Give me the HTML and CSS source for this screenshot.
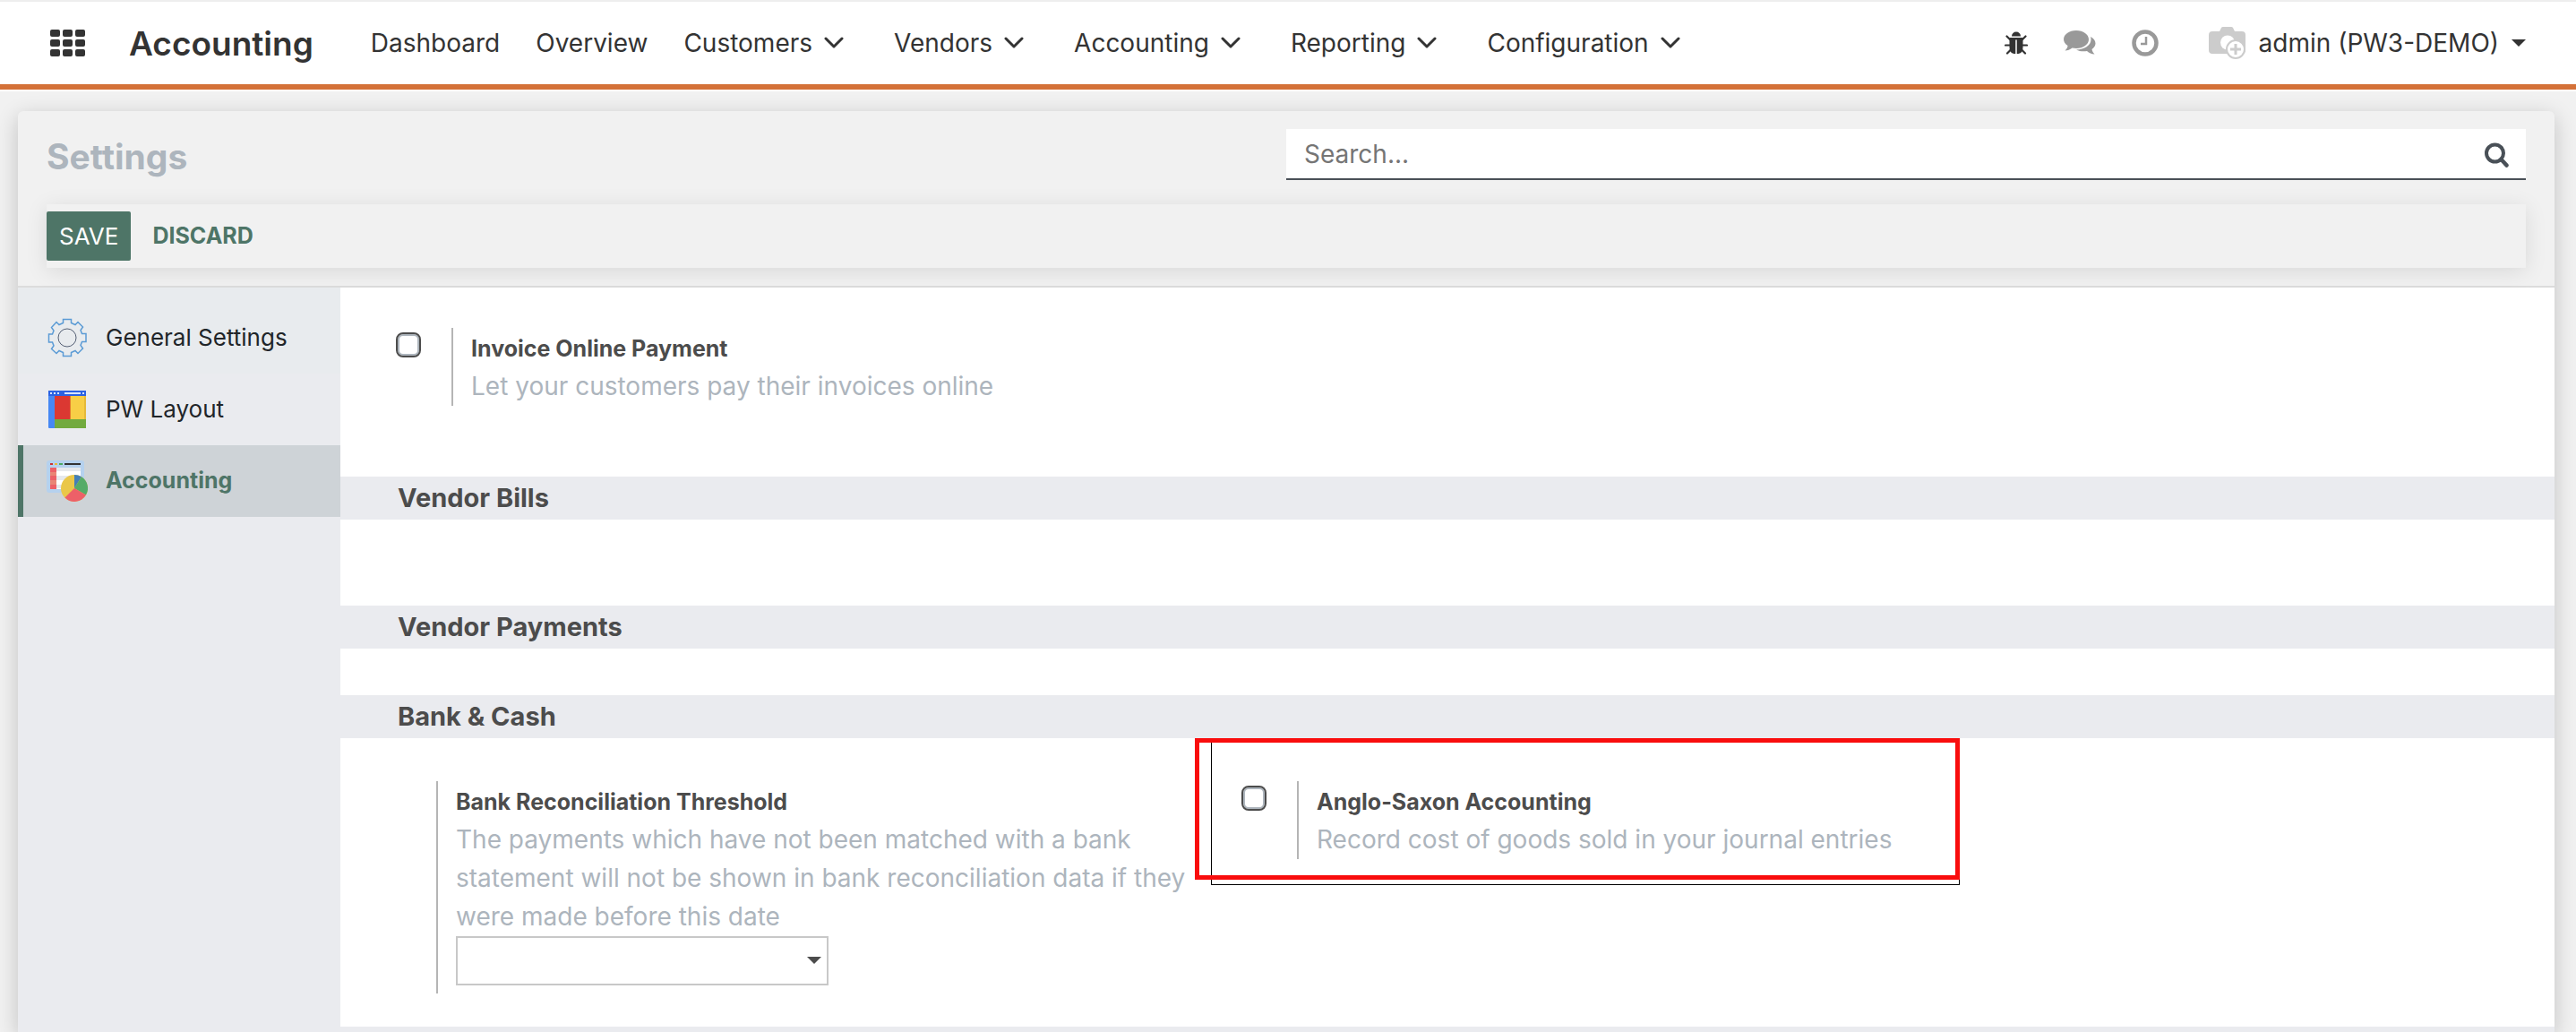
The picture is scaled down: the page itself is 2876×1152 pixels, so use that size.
FILE: index.html
```html
<!DOCTYPE html>
<html lang="en">
<head>
<meta charset="utf-8">
<title>Settings - Accounting</title>
<link rel="stylesheet" href="styles.css">
</head>
<body>
<header class="navbar">
  <button class="apps" type="button" aria-label="Applications">
    <svg width="40" height="30" viewBox="0 0 40 30" fill="#333"><rect x="0" y="0" width="11" height="8" rx="2"/><rect x="14" y="0" width="11" height="8" rx="2"/><rect x="28" y="0" width="11" height="8" rx="2"/><rect x="0" y="11" width="11" height="8" rx="2"/><rect x="14" y="11" width="11" height="8" rx="2"/><rect x="28" y="11" width="11" height="8" rx="2"/><rect x="0" y="22" width="11" height="8" rx="2"/><rect x="14" y="22" width="11" height="8" rx="2"/><rect x="28" y="22" width="11" height="8" rx="2"/></svg>
  </button>
  <a class="brand" href="#">Accounting</a>
  <nav class="menu">
    <a href="#">Dashboard</a>
    <a href="#">Overview</a>
    <a class="drop" href="#">Customers <svg class="chev" viewBox="0 0 22 14"><path d="M2 2l9 9 9-9"/></svg></a>
    <a class="drop" href="#">Vendors <svg class="chev" viewBox="0 0 22 14"><path d="M2 2l9 9 9-9"/></svg></a>
    <a class="drop" href="#">Accounting <svg class="chev" viewBox="0 0 22 14"><path d="M2 2l9 9 9-9"/></svg></a>
    <a class="drop" href="#">Reporting <svg class="chev" viewBox="0 0 22 14"><path d="M2 2l9 9 9-9"/></svg></a>
    <a class="drop" href="#">Configuration <svg class="chev" viewBox="0 0 22 14"><path d="M2 2l9 9 9-9"/></svg></a>
  </nav>
  <div class="systray">
    <button type="button" aria-label="Debug"><svg width="26" height="26" viewBox="0 0 26 26"><path d="M8 5.500a5 5 0 0 1 10 0z" fill="#333"/><path d="M5.500 7h15v11q0 6-5 7h-5q-5-1-5-7z" fill="#333"/><path d="M6 9L2.500 5.500M20 9l3.500-3.500M6 15.500H1M20 15.500h5M7 20.500l-4 4M19 20.500l4 4" stroke="#333" stroke-width="2.200" stroke-linecap="round"/><path d="M13 9.500V25" stroke="#ddd" stroke-width="1.800"/></svg></button>
    <button type="button" aria-label="Conversations"><svg width="36" height="28" viewBox="0 0 36 28" fill="#999"><path d="M14 0c8 0 14 4.500 14 10s-6 10-14 10c-1.500 0-3-.2-4.500-.5C7 21.500 4.500 22.500 1.500 22.500c1.500-1.500 3-3.500 3-5.500C1.500 15 0 12.500 0 10 0 4.500 6 0 14 0z"/><path d="M30 7c3.500 1.800 5.500 4.300 5.500 7.500 0 2.500-1.500 4.500-4 6.500.3 2 1.500 4 3 5.500-3.500 0-6-1.500-8.500-3.500-4 .8-8.500.3-12-1.500C23 21 30.500 17 30.500 10c0-1-.2-2-.5-3z"/></svg></button>
    <button type="button" aria-label="Activities"><svg width="30" height="30" viewBox="0 0 30 30" fill="none" stroke="#999"><circle cx="15" cy="15" r="12.500" stroke-width="4.500"/><path d="M16 8v8h-6" stroke-width="2.500"/></svg></button>
    <button class="user" type="button">
      <svg width="42" height="36" viewBox="0 0 42 36"><path d="M4 5h8l2-4q.5-1 2-1h9q1.500 0 2 1l2 4h8q4 0 4 4v17q0 4-4 4H4q-4 0-4-4V9q0-4 4-4z" fill="#ccc"/><circle cx="21" cy="17.500" r="8" fill="#fff"/><circle cx="30" cy="25" r="10" fill="#fff" stroke="#ccc" stroke-width="2"/><path d="M30 19v12M24 25h12" stroke="#ccc" stroke-width="3"/></svg>
      <span>admin (PW3-DEMO)</span>
      <svg width="16" height="8" viewBox="0 0 16 8"><path d="M0 0h16L8 8z" fill="#333"/></svg>
    </button>
  </div>
</header>
<main class="card">
  <div class="control">
    <div class="titlebar">
      <h1>Settings</h1>
      <div class="search">
        <input type="text" aria-label="Search" placeholder="Search...">
        <svg width="27" height="28" viewBox="0 0 27 28" fill="none" stroke="#495057"><circle cx="11.500" cy="12" r="9.500" stroke-width="4"/><path d="M18.500 19l6 6.500" stroke-width="4.500" stroke-linecap="round"/></svg>
      </div>
    </div>
    <div class="actions">
      <button class="save" type="button">SAVE</button>
      <button class="discard" type="button">DISCARD</button>
    </div>
  </div>
  <div class="body">
    <aside class="tabs">
      <a class="general" href="#"><svg width="46" height="46" viewBox="0 0 46 46" fill="none"><path d="M18.500 6.500V2.500h9v4l4.500 2 3-3 5.500 5.500-2.500 3.500 1.500 4h4.500v9h-4.500l-1.500 4 2.500 3.500-5.500 5.500-3-3-4.500 2v4h-9v-4l-4.500-2-3 3L5.500 35.500l2.500-3.500-1.500-4H2.500v-9h4l1.500-4-2.500-3.500L11 5.500l3 3z" stroke="#5b9bd5" stroke-width="1.500"/><circle cx="23" cy="23" r="10" stroke="#556075"/></svg>General Settings</a>
      <a href="#"><svg width="46" height="46" viewBox="0 0 46 46"><rect x="2" y="2" width="42" height="42" rx="1" fill="#4688f4"/><path d="M2 2h42v6H2z" fill="#2b62e3"/><path d="M4 4h2v2H4zM8 4h2v2H8zM12 4h2v2h-2zM20 4h18v2H20zM40 4h2v2h-2z" fill="#d5e3ff"/><path d="M9 8h18v26H9z" fill="#db3832"/><path d="M27 8h17v26H27z" fill="#f8ce46"/><path d="M26 8h1v26h-1z" fill="#e57a2f"/><path d="M9 34h35v10H9z" fill="#72aa3e"/><path d="M42 8h2v26h-2z" fill="#e5b93a"/></svg>PW Layout</a>
      <a class="active" href="#"><svg width="46" height="46" viewBox="0 0 46 46"><rect width="42" height="36" rx="3" fill="#b5d1ee"/><path d="M4 8h34v24H4z" fill="#fff"/><path d="M11 8h27v4H11zM11 17h27v5H11zM11 27h27v4H11z" fill="#e6e9ed"/><path d="M4 8h7v24H4z" fill="#ed6068"/><path d="M4 13h7v4H4zM4 22h7v5H4z" fill="#e98576"/><path d="M4 4h3" stroke="#c33" stroke-width="2"/><path d="M9 4h3" stroke="#e8b93a" stroke-width="2"/><path d="M14 4h4" stroke="#4aa864" stroke-width="2"/><path d="M20 4h18" stroke="#333" stroke-width="2"/><g><circle cx="31" cy="31" r="15" fill="#eac749"/><path d="M31 31V16a15 15 0 0 1 8 2.300z" fill="#437fb8"/><path d="M31 31l8-12.700a15 15 0 0 1 5 20.200z" fill="#55ab68"/><path d="M31 31l13 7.500a15 15 0 0 1-23.600 3.100z" fill="#ed6068"/></g></svg>Accounting</a>
    </aside>
    <div class="settings">
      <section class="group first">
        <div class="setting">
          <input type="checkbox" id="online">
          <div class="detail"><label for="online">Invoice Online Payment</label><p>Let your customers pay their invoices online</p></div>
        </div>
      </section>
      <h2>Vendor Bills</h2>
      <section class="group bills"></section>
      <h2>Vendor Payments</h2>
      <section class="group payments"></section>
      <h2>Bank &amp; Cash</h2>
      <section class="group bank">
        <div class="setting threshold">
          <div class="detail"><label for="date">Bank Reconciliation Threshold</label><p>The payments which have not been matched with a bank statement will not be shown in bank reconciliation data if they were made before this date</p>
            <div class="picker"><select id="date"><option></option></select><svg width="16" height="8" viewBox="0 0 16 8"><path d="M0 0h16L8 8z" fill="#4c4c4c"/></svg></div></div>
        </div>
        <div class="setting anglo">
          <input type="checkbox" id="anglo">
          <div class="detail"><label for="anglo">Anglo-Saxon Accounting</label><p>Record cost of goods sold in your journal entries</p></div>
          <div class="outline"></div><div class="highlight"></div>
        </div>
      </section>
      <div class="nextband"></div>
    </div>
  </div>
</main>
</body>
</html>
```
FILE: styles.css
```css
* { box-sizing: border-box; }
body { margin: 0; background: #f1f1f1; color: #4c4c4c; font: 28px/43px Inter, "Liberation Sans", sans-serif; overflow-x: hidden; }
button { font: inherit; color: inherit; background: none; border: 0; padding: 0; display: flex; align-items: center; }
a { color: inherit; text-decoration: none; }
h1, h2, p { margin: 0; }
svg { flex: none; display: block; }

.navbar { display: flex; align-items: center; height: 102px; padding: 0 56px 6px; background: #fff; color: #333; border-top: 2px solid #eee; border-bottom: 2px solid #fff; box-shadow: inset 0 -6px #d47138; }
.brand { font-size: 37px; font-weight: 600; margin-left: 48px; }
.menu { display: flex; margin-left: 64px; gap: 40px; }
.drop { display: flex; align-items: center; gap: 13px; margin-right: 16px; }
.chev { width: 22px; height: 14px; fill: none; stroke: #333; stroke-width: 3; stroke-linecap: round; stroke-linejoin: round; }
.systray { display: flex; align-items: center; margin-left: auto; gap: 40px; }
.user { gap: 14px; margin-left: 16px; }

.card { margin: 22px 24px 0 20px; border-radius: 6px 6px 0 0; box-shadow: 0 6px 24px rgba(0,0,0,.2); background: #f1f1f1; }
.control { padding: 20px 32px; border-bottom: 2px solid #dcdcdc; }
.titlebar { display: flex; justify-content: space-between; align-items: flex-start; }
h1 { font-size: 39px; line-height: 62px; font-weight: 700; color: #adb5bd; }
.search { display: flex; align-items: center; width: 50%; height: 57px; padding: 2px 19px 0 20px; background: #fff; border-bottom: 2px solid #495057; }
.search input { flex: 1; min-width: 0; border: 0; outline: 0; padding: 0; background: none; font: inherit; color: #495057; }
.search input::placeholder { color: #757575; opacity: 1; }
.actions { display: flex; align-items: center; gap: 24px; height: 71px; margin-top: 22px; background: #f1f1f1; box-shadow: 0 4px 24px rgba(0,0,0,.1); }
.save { height: 55px; padding: 0 14px; background: #4e7567; color: #fff; font-size: 26px; border-radius: 2px; }
.discard { color: #4e7567; font-weight: 700; font-size: 25px; }

.body { display: flex; min-height: 831px; }
.tabs { width: 360px; flex: none; background: #eaebef; color: #212529; font-size: 26px; }
.tabs a { display: flex; align-items: center; height: 80px; gap: 20px; padding: 0 0 1px 32px; }
.tabs .general { height: 96px; padding-top: 16px; background: #e8ebee; }
.tabs .active { background: #ced3d7; color: #4e7567; font-size: 25px; font-weight: 700; border-left: 6px solid #4e7567; padding-left: 26px; }
.settings { flex: 1; min-width: 0; background: #fff; }
h2 { height: 48px; padding-left: 64px; background: #eaebef; font-size: 29px; line-height: 48px; font-weight: 700; }
.group { display: flex; padding: 45px 0 0 33px; }
.first { height: 211px; }
.bills { height: 96px; }
.payments { height: 52px; }
.bank { height: 322px; padding-top: 48px; }
.setting { display: flex; align-items: flex-start; width: 944px; padding-left: 29px; position: relative; }
.setting input { appearance: none; flex: none; width: 28px; height: 28px; margin: 5px 34px 0 0; border: 2px solid #4c4c4c; border-radius: 8px; background: #fff; box-shadow: inset 0 0 0 2px #adb5bd; }
.detail { border-left: 2px solid #b5b5b5; padding-left: 20px; padding-top: 1px; }
.detail label { display: block; line-height: 42px; padding-top: 1px; font-size: 25px; font-weight: 700; }
.detail p { color: #adb5bd; }
.threshold { padding-left: 74px; }
.threshold .detail { padding-bottom: 9px; }
.picker { position: relative; width: 416px; }
.picker svg { position: absolute; right: 8px; top: 23px; pointer-events: none; }
select { appearance: none; display: block; width: 100%; height: 55px; border: 2px solid #c8c8c8; border-radius: 0; background: #fff; }
.outline { position: absolute; left: -5px; top: -46px; width: 836px; height: 162px; border: 1px solid #000; pointer-events: none; }
.highlight { position: absolute; left: -23px; top: -48px; width: 854px; height: 158px; border: 5px solid #f90d0d; pointer-events: none; }
.nextband { height: 6px; background: #eaebef; }
```
